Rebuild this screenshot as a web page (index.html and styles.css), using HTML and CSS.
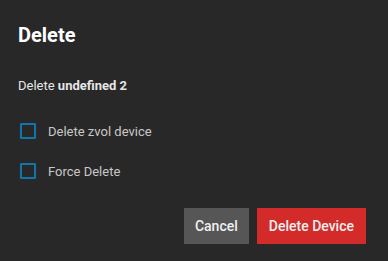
FILE: index.html
```html
<!DOCTYPE html>
<html lang="en">
<head>
    <meta charset="UTF-8">
    <title>Delete</title>
    <link rel="stylesheet" href="styles.css">
</head>
<body>
    <!-- Delete dialog -->
    <div class="dialog">
        <h1 class="dialog-title">Delete</h1>
        <p class="dialog-message">Delete <strong>undefined 2</strong></p>

        <label class="check-row">
            <span class="check-box"></span>
            <span class="check-label">Delete zvol device</span>
        </label>
        <label class="check-row">
            <span class="check-box"></span>
            <span class="check-label">Force Delete</span>
        </label>

        <div class="dialog-actions">
            <button class="btn btn-cancel">Cancel</button>
            <button class="btn btn-delete">Delete Device</button>
        </div>
    </div>
</body>
</html>
```

FILE: styles.css
```css
/* Base */
body, html {
    margin: 0;
    padding: 0;
    width: 100%;
    height: 100%;
    background: #282828;
    font-family: Roboto, "Liberation Sans", sans-serif;
    overflow: hidden;
}

.dialog {
    padding: 23px 22px 17px 18px;
    color: #e6e6e6;
}

.dialog-title {
    margin: 0;
    font-size: 20px;
    line-height: 24px;
    font-weight: 700;
    color: #ffffff;
}

.dialog-message {
    margin: 31px 0 0;
    font-size: 13px;
    line-height: 16px;
    color: #e6e6e6;
}

.dialog-message strong {
    font-weight: 700;
}

/* Checkbox rows */
.check-row {
    display: flex;
    align-items: center;
    height: 40px;
    padding-left: 2px;
}

.dialog-message + .check-row {
    margin-top: 17px;
}

.check-box {
    width: 12px;
    height: 12px;
    border: 2px solid #1274ad;
    border-radius: 1px;
}

.check-label {
    margin-left: 12px;
    font-size: 13px;
    color: #c8c8c8;
}

/* Buttons */
.dialog-actions {
    display: flex;
    justify-content: flex-end;
    gap: 8px;
    margin-top: 17px;
}

.btn {
    height: 36px;
    border: none;
    padding: 0 11px;
    font-family: Roboto, "Liberation Sans", sans-serif;
    font-size: 14px;
    font-weight: 500;
    color: #f0f0f0;
    cursor: pointer;
}

.btn-cancel {
    background: #565656;
}

.btn-delete {
    padding: 0 12px;
    background: #d32a2a;
}
```
